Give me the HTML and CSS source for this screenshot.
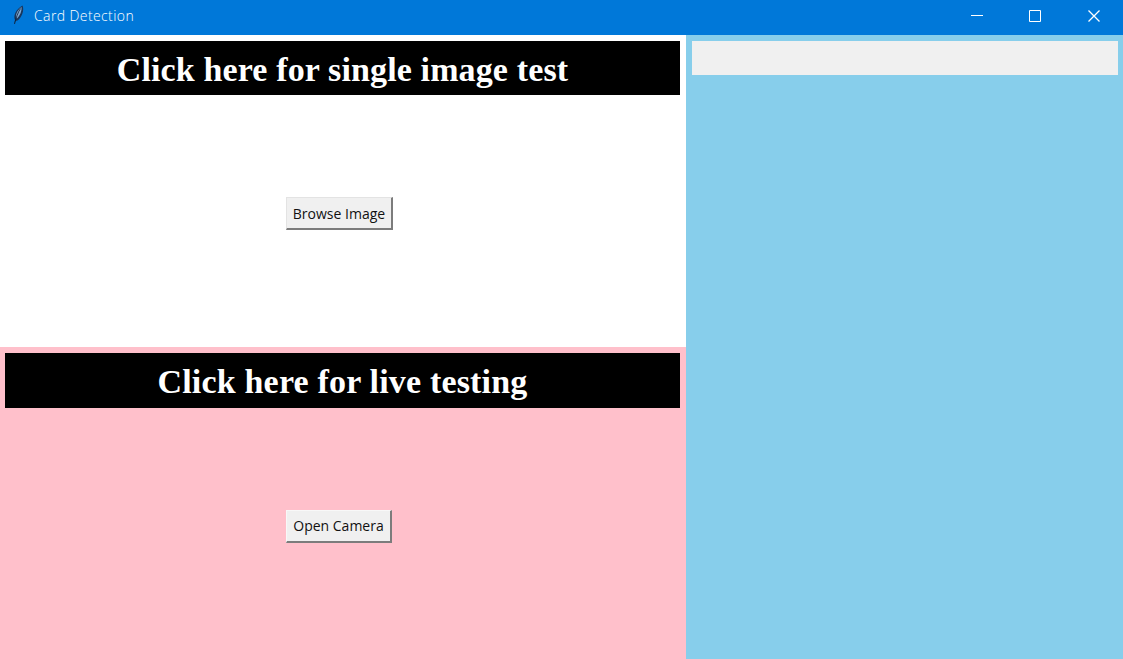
FILE: index.html
```html
<!DOCTYPE html>
<html lang="en">
<head>
<meta charset="utf-8">
<title>Card Detection</title>
<link rel="stylesheet" href="styles.css">
</head>
<body>
<div class="window">
  <header class="titlebar">
    <svg class="feather" width="16" height="22" viewBox="0 0 16 22">
      <path d="M4 20.5 5 16C3 12 6 5 12.5 1.5 14.500 6 12 13.500 7.500 16.500L5.500 17Z" fill="#18365c"/>
      <path d="M6 14C5.500 9.500 8 5.500 11.500 3 12 7 10 11.500 7 14.500Z" fill="#7fa6cf"/>
      <path d="M4.500 20C6 14 8 8 10.500 4.500" fill="none" stroke="#0b1c34" stroke-width=".8"/>
    </svg>
    <h1 class="caption">Card Detection</h1>
    <div class="controls">
      <svg width="58" height="35" viewBox="0 0 58 35"><path d="M20 15.500h12"/></svg>
      <svg width="58" height="35" viewBox="0 0 58 35"><path d="M20.500 10.500h11v11h-11z"/></svg>
      <svg width="58" height="35" viewBox="0 0 58 35"><path class="cross" d="M21.500 10.500l11 11m0-11l-11 11"/></svg>
    </div>
  </header>
  <main class="content">
    <div class="left">
      <section class="panel panel-image">
        <h2 class="banner banner-image">Click here for single image test</h2>
        <button class="button button-browse">Browse Image</button>
      </section>
      <section class="panel panel-live">
        <h2 class="banner banner-live">Click here for live testing</h2>
        <button class="button button-camera">Open Camera</button>
      </section>
    </div>
    <aside class="right"><div class="result"></div></aside>
  </main>
</div>
</body>
</html>
```
FILE: styles.css
```css
* { box-sizing: border-box; }
body { margin: 0; overflow: hidden; }
.window { width: 1123px; height: 659px; display: flex; flex-direction: column; }
.titlebar { height: 35px; flex: none; display: flex; background: #0078d9; color: #fff; }
.feather { margin: 4px 0 0 10px; }
.caption { margin: 0 0 0 8px; font: 300 14px/32px "Open Sans", "Noto Sans", sans-serif; white-space: nowrap; letter-spacing: 0.4px; }
.controls { margin: 0 -2px 0 auto; display: flex; }
.controls path { fill: none; stroke: #fff; stroke-width: 1; }
.controls .cross { stroke-width: 1.3; }
.content { flex: 1; display: flex; }
.left { flex: none; width: 686px; display: flex; flex-direction: column; }
.panel { display: flex; flex-direction: column; align-items: flex-start; padding: 6px 6px 0 5px; }
.panel-image { height: 312px; background: #fff; }
.panel-live { flex: 1; background: #ffc0cb; }
.banner { width: 675px; height: 54px; margin: 0; background: #000; color: #fff; text-align: center; font: 700 34px/58px "Liberation Serif", "Times New Roman", serif; white-space: nowrap; }
.banner-image { letter-spacing: 0.13px; }
.banner-live { height: 55px; letter-spacing: 0.18px; }
.button { margin: 102px 0 0 281px; height: 33px; padding: 0; background: #f0f0f0; color: #111; border: solid; border-width: 1px 2px 2px 1px; border-color: #f8f8f8 #7c7c7c #7c7c7c #f8f8f8; border-radius: 0; font: 400 14px/28px "Open Sans", "Noto Sans", sans-serif; white-space: nowrap; }
.button-browse { width: 107px; padding-top: 1px; border-top-color: #e3e3e3; border-left-color: #e3e3e3; }
.button-camera { width: 106px; }
.right { flex: 1; background: #87ceeb; padding: 6px 5px 0 6px; }
.result { height: 34px; background: #f0f0f0; }
```
